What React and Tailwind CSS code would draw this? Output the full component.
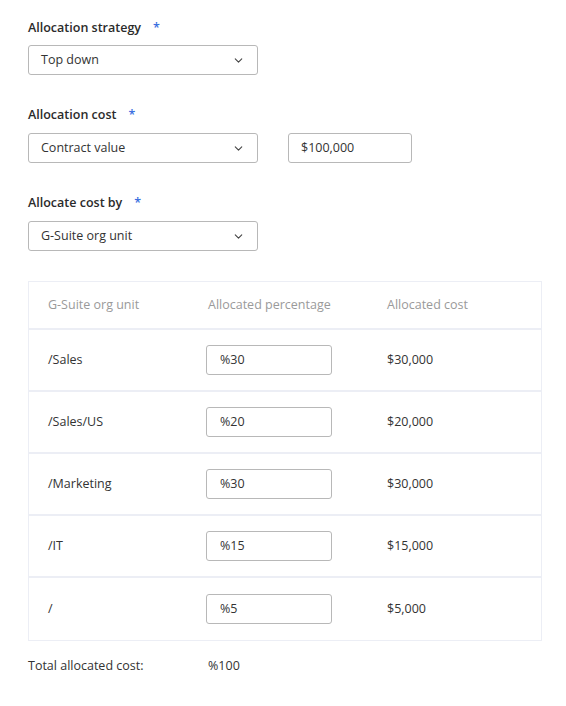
import { ChevronDown } from 'lucide-react'

const rows = [
  { unit: '/Sales', pct: '%30', cost: '$30,000' },
  { unit: '/Sales/US', pct: '%20', cost: '$20,000' },
  { unit: '/Marketing', pct: '%30', cost: '$30,000' },
  { unit: '/IT', pct: '%15', cost: '$15,000' },
  { unit: '/', pct: '%5', cost: '$5,000' },
]

function FieldLabel({ children }) {
  return (
    <div className="flex items-center h-[20px] text-[12.5px] font-semibold text-[#2b2b2b]">
      <span>{children}</span>
      <span className="ml-[12px] text-[#3b6fe0]">*</span>
    </div>
  )
}

function Select({ value }) {
  return (
    <div className="w-[230px] h-[30px] flex items-center justify-between border border-[#b8b8b8] rounded-[3px] pl-[12px] pr-[12px] pt-[1px] text-[12.5px] text-[#333]">
      <span>{value}</span>
      <ChevronDown size={13} strokeWidth={2} className="text-[#444]" />
    </div>
  )
}

export default function App() {
  return (
    <div className="min-h-screen bg-white px-[28px] pt-[18px] text-[#333]" style={{ fontFamily: '"Open Sans", "Liberation Sans", sans-serif' }}>
      {/* Strategy */}
      <FieldLabel>Allocation strategy</FieldLabel>
      <div className="mt-[7px]">
        <Select value="Top down" />
      </div>

      {/* Cost */}
      <div className="mt-[30px]">
        <FieldLabel>Allocation cost</FieldLabel>
        <div className="mt-[8px] flex gap-[30px]">
          <Select value="Contract value" />
          <div className="w-[124px] h-[30px] flex items-center border border-[#b8b8b8] rounded-[3px] pl-[12px] pt-[1px] text-[12.5px] text-[#333]">
            $100,000
          </div>
        </div>
      </div>

      {/* Cost by */}
      <div className="mt-[30px]">
        <FieldLabel>Allocate cost by</FieldLabel>
        <div className="mt-[8px]">
          <Select value="G-Suite org unit" />
        </div>
      </div>

      {/* Table */}
      <div className="mt-[30px] w-[514px] border border-[#eceef5]">
        <div className="h-[48px] flex items-center border-b-2 border-[#eceef5] text-[12.5px] text-[#9a9a9a]">
          <div className="w-[177px] pl-[19px]">G-Suite org unit</div>
          <div className="w-[181px] pl-[2px]">Allocated percentage</div>
          <div>Allocated cost</div>
        </div>
        {rows.map((r, i) => (
          <div
            key={r.unit}
            className={`h-[62px] flex items-center text-[12.5px] text-[#333] ${i < rows.length - 1 ? 'border-b-2 border-[#eceef5]' : ''}`}
          >
            <div className="w-[177px] pl-[19px]">{r.unit}</div>
            <div className="w-[181px]">
              <div className="w-[126px] h-[30px] flex items-center border border-[#b8b8b8] rounded-[3px] pl-[13px] pt-[1px]">
                {r.pct}
              </div>
            </div>
            <div>{r.cost}</div>
          </div>
        ))}
      </div>

      {/* Total */}
      <div className="mt-[16px] flex text-[12.5px] text-[#333]">
        <div className="w-[180px]">Total allocated cost:</div>
        <div>%100</div>
      </div>
    </div>
  )
}
